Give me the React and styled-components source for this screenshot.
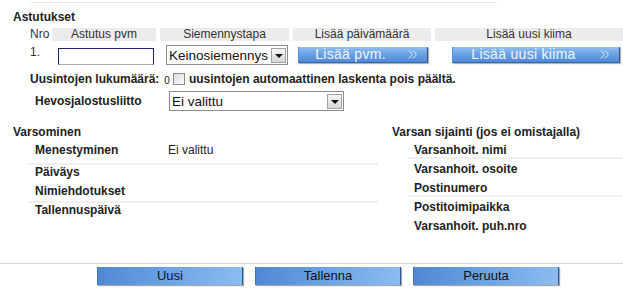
import React from 'react';
import styled, { createGlobalStyle } from 'styled-components';

const GlobalStyle = createGlobalStyle`
  html, body {
    margin: 0;
    padding: 0;
    background: #fff;
  }
  body {
    font-family: 'Liberation Sans', Arial, sans-serif;
    font-size: 12px;
    color: #1e1e1e;
  }
`;

const Page = styled.div`
  width: 623px;
  height: 297px;
  overflow: hidden;
`;

const TopRule = styled.div`
  margin-left: 30px;
  width: 467px;
  height: 2px;
  border-bottom: 1px solid #e8e8e8;
`;

const SectionTitle = styled.h2`
  margin: 0;
  font-size: 12px;
  line-height: 14px;
  font-weight: bold;
  color: #222;
`;

const Astutukset = styled.section`
  padding: 7px 0 0 13px;
`;

const Grid = styled.div`
  margin: 4px 0 0 17px;
  display: grid;
  grid-template-columns: 18px 104px 129px 138px 1fr;
  column-gap: 4px;
  row-gap: 4px;
  align-items: start;
`;

const HeadCell = styled.div`
  height: 13px;
  line-height: 13px;
  color: #333;
  text-align: ${({ $plain }) => ($plain ? 'left' : 'center')};
  background: ${({ $plain }) => ($plain ? 'transparent' : '#ececec')};
  white-space: nowrap;
`;

const NroCell = styled.div`
  line-height: 14px;
  color: #333;
`;

const TextInput = styled.input`
  box-sizing: border-box;
  margin: 3px 0 0 6px;
  width: 96px;
  height: 17px;
  padding: 0 2px;
  border: 1px solid #1f2468;
  border-bottom-color: #a8a8a8;
  background: #fff;
  outline: none;
`;

const SelectBox = styled.div`
  box-sizing: border-box;
  display: flex;
  align-items: center;
  margin-left: ${({ $ml }) => $ml || 0}px;
  width: ${({ $w }) => $w}px;
  height: 20px;
  padding-left: 2px;
  border: 1px solid #8c8c8c;
  background: #fff;
  font-size: 13.5px;
  color: #111;
  white-space: nowrap;
`;

const SelectArrow = styled.span`
  box-sizing: border-box;
  position: relative;
  flex: none;
  margin: 0 1px 0 auto;
  width: 15px;
  height: 15px;
  border: 1px solid #a3a3a3;
  background: linear-gradient(#f6f6f6, #d6d6d6);
  &::after {
    content: '';
    position: absolute;
    left: 3px;
    top: 5px;
    border-left: 4px solid transparent;
    border-right: 4px solid transparent;
    border-top: 4px solid #111;
  }
`;

const BlueButton = styled.button`
  box-sizing: border-box;
  display: flex;
  align-items: center;
  margin: 2px 0 0 ${({ $ml }) => $ml}px;
  width: ${({ $w }) => $w}px;
  height: 16px;
  padding: 0 9px 0 0;
  border: none;
  border-left: 1px solid #5b8fd2;
  border-right: 1px solid #2c5b9a;
  border-bottom: 1px solid #3566a8;
  background: linear-gradient(#93c0f1 0%, #6fa6e7 40%, #4e89d7 100%);
  box-shadow: 1px 1px 1px rgba(0, 0, 0, 0.3);
  font-family: inherit;
  font-size: 14px;
  letter-spacing: 0.3px;
  color: #eef5ff;
  cursor: pointer;
`;

const ButtonLabel = styled.span`
  flex: 1;
  text-align: center;
  padding-right: 6px;
  line-height: 15px;
`;

const Chevron = () => (
  <svg width="10" height="9" viewBox="0 0 10 9">
    <polyline points="1,0.5 4.5,4.5 1,8.5" fill="none" stroke="#e2ecf9" strokeWidth="1" />
    <polyline points="5,0.5 8.5,4.5 5,8.5" fill="none" stroke="#e2ecf9" strokeWidth="1" />
  </svg>
);

const OptionLine = styled.div`
  display: flex;
  align-items: center;
  margin: 7px 0 0 17px;
  height: 14px;
  font-weight: bold;
  color: #222;
`;

const Count = styled.span`
  margin-left: 5px;
  font-size: 10px;
  font-weight: normal;
  padding-top: 3px;
`;

const CheckBox = styled.span`
  box-sizing: border-box;
  margin: 0 4px 0 3px;
  width: 12px;
  height: 12px;
  border: 1px solid #8a8a8a;
  background: linear-gradient(135deg, #dcdcdc, #fbfbfb);
`;

const FieldLine = styled.div`
  display: flex;
  align-items: center;
  margin: 5px 0 0 22px;
`;

const FieldLabel = styled.span`
  width: 134px;
  font-weight: bold;
  color: #222;
`;

const Lower = styled.div`
  display: flex;
  height: 138px;
  margin-top: 14px;
  padding-left: 13px;
`;

const Column = styled.div`
  width: ${({ $w }) => ($w ? `${$w}px` : 'auto')};
  flex: ${({ $w }) => ($w ? 'none' : 1)};
`;

const Rows = styled.div`
  margin: 1px 0 0 ${({ $ml }) => $ml}px;
  width: ${({ $w }) => $w}px;
`;

const DataRow = styled.div`
  box-sizing: border-box;
  display: flex;
  height: ${({ $h }) => $h || 19}px;
  padding: 3px 0 0 ${({ $pl }) => $pl}px;
  line-height: 14px;
  background: ${({ $lineAt }) =>
    $lineAt === undefined
      ? 'none'
      : `linear-gradient(#efefef, #efefef) no-repeat 0 ${$lineAt}px / 100% 2px`};
`;

const RowLabel = styled.span`
  width: ${({ $w }) => ($w ? `${$w}px` : 'auto')};
  font-weight: bold;
  color: #222;
`;

const RowValue = styled.span`
  color: #222;
`;

const FooterRule = styled.div`
  height: 0;
  border-top: 1px solid #d2d2d2;
`;

const Footer = styled.div`
  display: flex;
  gap: 12px;
  padding: 3px 0 0 97px;
`;

const FooterButton = styled.button`
  box-sizing: border-box;
  width: 146px;
  height: 18px;
  padding: 0;
  border: none;
  border-left: 1px solid #4277be;
  border-right: 1px solid #2d5894;
  background: linear-gradient(100deg, #4f87d3 0%, #6aa1e3 45%, #8cbcf0 100%);
  box-shadow: 1px 1px 1px rgba(0, 0, 0, 0.35);
  font-family: inherit;
  font-size: 13px;
  line-height: 18px;
  color: #111;
  cursor: pointer;
`;

const leftRows = [
  { label: 'Menestyminen', value: 'Ei valittu', h: 22 },
  { label: 'Päiväys', lineAt: 1 },
  { label: 'Nimiehdotukset' },
  { label: 'Tallennuspäivä', lineAt: 1 },
];

const rightRows = [
  { label: 'Varsanhoit. nimi', lineAt: 17 },
  { label: 'Varsanhoit. osoite' },
  { label: 'Postinumero', lineAt: 17 },
  { label: 'Postitoimipaikka' },
  { label: 'Varsanhoit. puh.nro' },
];

export default function App() {
  return (
    <Page>
      <GlobalStyle />
      <TopRule />
      <Astutukset>
        <SectionTitle>Astutukset</SectionTitle>
        <Grid>
          <HeadCell $plain>Nro</HeadCell>
          <HeadCell>Astutus pvm</HeadCell>
          <HeadCell>Siemennystapa</HeadCell>
          <HeadCell>Lisää päivämäärä</HeadCell>
          <HeadCell>Lisää uusi kiima</HeadCell>

          <NroCell>1.</NroCell>
          <TextInput type="text" />
          <SelectBox $ml={6} $w={122}>
            Keinosiemennys
            <SelectArrow />
          </SelectBox>
          <BlueButton $ml={5} $w={130}>
            <ButtonLabel>Lisää pvm.</ButtonLabel>
            <Chevron />
          </BlueButton>
          <BlueButton $ml={17} $w={168}>
            <ButtonLabel>Lisää uusi kiima</ButtonLabel>
            <Chevron />
          </BlueButton>
        </Grid>
        <OptionLine>
          Uusintojen lukumäärä:
          <Count>0</Count>
          <CheckBox />
          uusintojen automaattinen laskenta pois päältä.
        </OptionLine>
        <FieldLine>
          <FieldLabel>Hevosjalostusliitto</FieldLabel>
          <SelectBox $w={175}>
            Ei valittu
            <SelectArrow />
          </SelectBox>
        </FieldLine>
      </Astutukset>

      <Lower>
        <Column $w={379}>
          <SectionTitle>Varsominen</SectionTitle>
          <Rows $ml={15} $w={350}>
            {leftRows.map((r) => (
              <DataRow key={r.label} $h={r.h} $pl={7} $lineAt={r.lineAt}>
                <RowLabel $w={133}>{r.label}</RowLabel>
                {r.value && <RowValue>{r.value}</RowValue>}
              </DataRow>
            ))}
          </Rows>
        </Column>
        <Column>
          <SectionTitle>Varsan sijainti (jos ei omistajalla)</SectionTitle>
          <Rows $ml={16} $w={215}>
            {rightRows.map((r) => (
              <DataRow key={r.label} $pl={6} $lineAt={r.lineAt}>
                <RowLabel>{r.label}</RowLabel>
              </DataRow>
            ))}
          </Rows>
        </Column>
      </Lower>

      <FooterRule />
      <Footer>
        <FooterButton>Uusi</FooterButton>
        <FooterButton>Tallenna</FooterButton>
        <FooterButton>Peruuta</FooterButton>
      </Footer>
    </Page>
  );
}
